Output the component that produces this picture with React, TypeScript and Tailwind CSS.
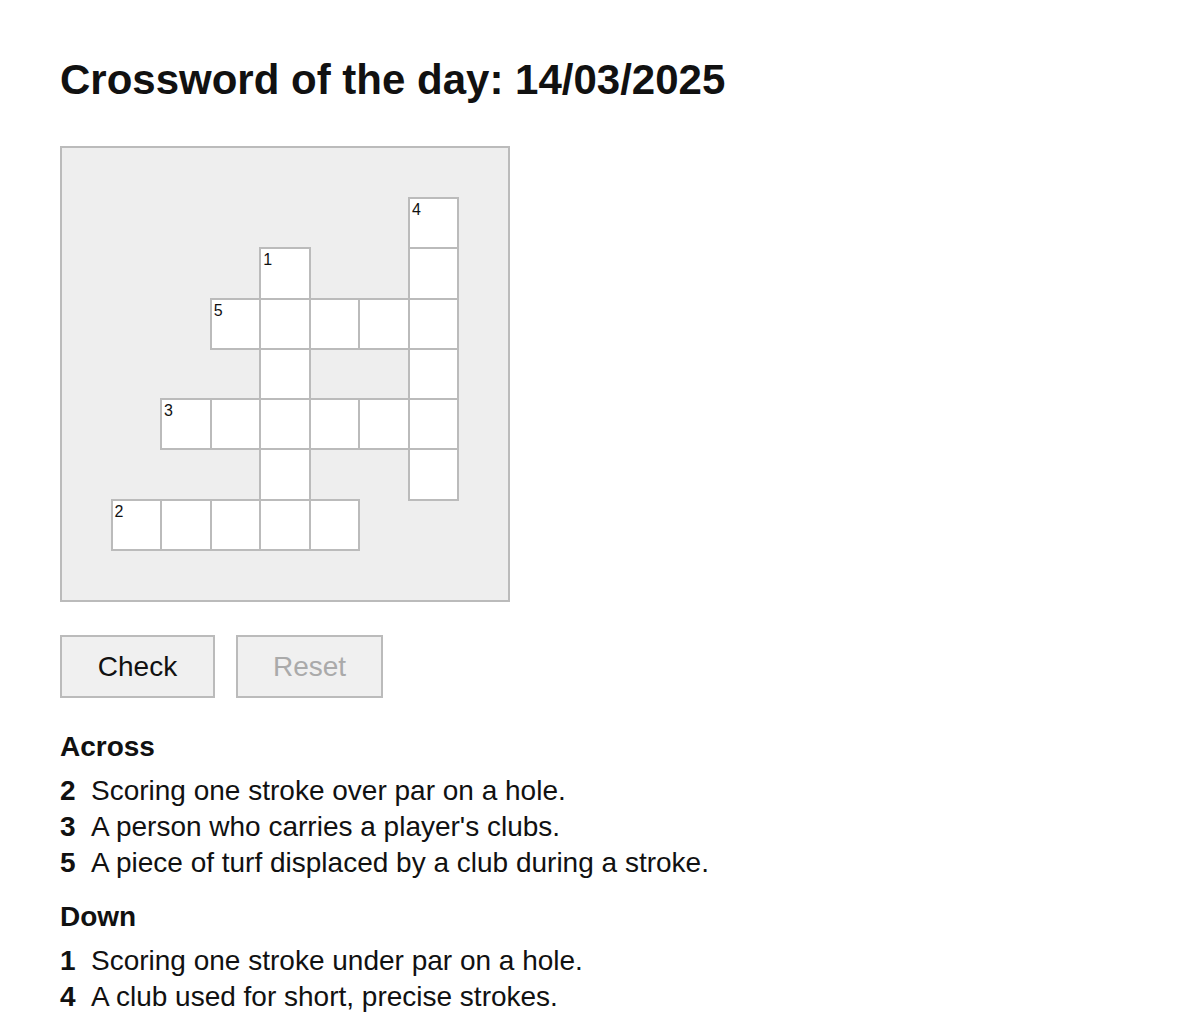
import React from "react";

type Cell = { row: number; col: number; num?: number };

// rows/cols are 1-based positions on a 9x9 board
const cells: Cell[] = [
  { row: 2, col: 8, num: 4 },
  { row: 3, col: 5, num: 1 },
  { row: 3, col: 8 },
  { row: 4, col: 4, num: 5 },
  { row: 4, col: 5 },
  { row: 4, col: 6 },
  { row: 4, col: 7 },
  { row: 4, col: 8 },
  { row: 5, col: 5 },
  { row: 5, col: 8 },
  { row: 6, col: 3, num: 3 },
  { row: 6, col: 4 },
  { row: 6, col: 5 },
  { row: 6, col: 6 },
  { row: 6, col: 7 },
  { row: 6, col: 8 },
  { row: 7, col: 5 },
  { row: 7, col: 8 },
  { row: 8, col: 2, num: 2 },
  { row: 8, col: 3 },
  { row: 8, col: 4 },
  { row: 8, col: 5 },
  { row: 8, col: 6 },
];

const across = [
  { num: 2, clue: "Scoring one stroke over par on a hole." },
  { num: 3, clue: "A person who carries a player's clubs." },
  { num: 5, clue: "A piece of turf displaced by a club during a stroke." },
];

const down = [
  { num: 1, clue: "Scoring one stroke under par on a hole." },
  { num: 4, clue: "A club used for short, precise strokes." },
];

function ClueList({ title, items }: { title: string; items: { num: number; clue: string }[] }) {
  return (
    <section>
      <h2 className="text-[28px] font-bold leading-[36px]">{title}</h2>
      <ol className="mt-2">
        {items.map((item) => (
          <li key={item.num} className="flex text-[28px] leading-[36px]">
            <span className="w-[31px] shrink-0 font-bold">{item.num}</span>
            <span>{item.clue}</span>
          </li>
        ))}
      </ol>
    </section>
  );
}

export default function App() {
  return (
    <div
      className="min-h-screen bg-white pl-[60px] pt-[56px] text-[#111]"
      style={{ fontFamily: '"Liberation Sans", Arial, sans-serif' }}
    >
      <h1 className="text-[42px] font-bold leading-[48px]">Crossword of the day: 14/03/2025</h1>

      <div className="mt-[42px] grid h-[456px] w-[450px] grid-cols-9 grid-rows-9 border-2 border-[#bbb] bg-[#eee]">
        {cells.map((cell) => (
          <div
            key={`${cell.row}-${cell.col}`}
            className="relative -m-px border-2 border-[#bbb] bg-white"
            style={{ gridRow: cell.row, gridColumn: cell.col }}
          >
            {cell.num ? (
              <span className="absolute left-[2px] top-[3px] text-[16px] leading-none">{cell.num}</span>
            ) : null}
          </div>
        ))}
      </div>

      <div className="mt-[33px] flex gap-[21px]">
        <button className="h-[63px] w-[155px] border-2 border-[#bbb] bg-[#f0f0f0] text-[28px] text-[#111]">
          Check
        </button>
        <button
          disabled
          className="h-[63px] w-[147px] border-2 border-[#bbb] bg-[#f0f0f0] text-[28px] text-[#aaa]"
        >
          Reset
        </button>
      </div>

      <div className="mt-[31px] flex flex-col gap-[18px]">
        <ClueList title="Across" items={across} />
        <ClueList title="Down" items={down} />
      </div>
    </div>
  );
}
